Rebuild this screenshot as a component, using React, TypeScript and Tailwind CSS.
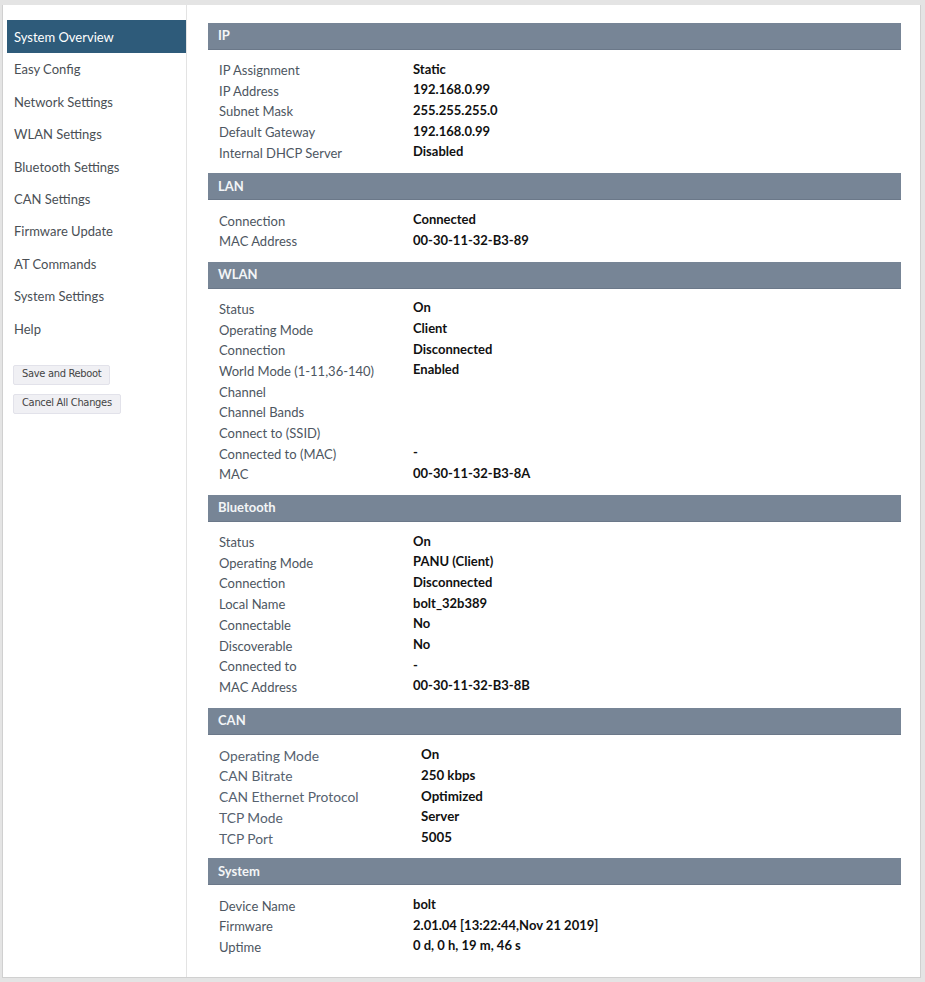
import React from "react";

type Row = [string, string];

interface Section {
  title: string;
  rows: Row[];
  large?: boolean;
}

const menu = [
  "System Overview",
  "Easy Config",
  "Network Settings",
  "WLAN Settings",
  "Bluetooth Settings",
  "CAN Settings",
  "Firmware Update",
  "AT Commands",
  "System Settings",
  "Help",
];

const sections: Section[] = [
  {
    title: "IP",
    rows: [
      ["IP Assignment", "Static"],
      ["IP Address", "192.168.0.99"],
      ["Subnet Mask", "255.255.255.0"],
      ["Default Gateway", "192.168.0.99"],
      ["Internal DHCP Server", "Disabled"],
    ],
  },
  {
    title: "LAN",
    rows: [
      ["Connection", "Connected"],
      ["MAC Address", "00-30-11-32-B3-89"],
    ],
  },
  {
    title: "WLAN",
    rows: [
      ["Status", "On"],
      ["Operating Mode", "Client"],
      ["Connection", "Disconnected"],
      ["World Mode (1-11,36-140)", "Enabled"],
      ["Channel", ""],
      ["Channel Bands", ""],
      ["Connect to (SSID)", ""],
      ["Connected to (MAC)", "-"],
      ["MAC", "00-30-11-32-B3-8A"],
    ],
  },
  {
    title: "Bluetooth",
    rows: [
      ["Status", "On"],
      ["Operating Mode", "PANU (Client)"],
      ["Connection", "Disconnected"],
      ["Local Name", "bolt_32b389"],
      ["Connectable", "No"],
      ["Discoverable", "No"],
      ["Connected to", "-"],
      ["MAC Address", "00-30-11-32-B3-8B"],
    ],
  },
  {
    title: "CAN",
    large: true,
    rows: [
      ["Operating Mode", "On"],
      ["CAN Bitrate", "250 kbps"],
      ["CAN Ethernet Protocol", "Optimized"],
      ["TCP Mode", "Server"],
      ["TCP Port", "5005"],
    ],
  },
  {
    title: "System",
    rows: [
      ["Device Name", "bolt"],
      ["Firmware", "2.01.04 [13:22:44,Nov 21 2019]"],
      ["Uptime", "0 d, 0 h, 19 m, 46 s"],
    ],
  },
];

function SectionBlock({ section }: { section: Section }) {
  return (
    <div>
      <div className="h-[27px] flex items-center pl-[10px] bg-[#778596] border-b border-[#6b7889] text-[13px] font-bold text-[#f3f5f7]">
        {section.title}
      </div>
      <div className={section.large ? "pt-[11px] pb-[9px] pl-[11px]" : "pt-[10px] pb-[10px] pl-[11px]"}>
        {section.rows.map(([label, value], i) => (
          <div key={i} className={section.large ? "flex h-[20.8px] items-center" : "flex h-[20.7px] items-center pt-[1px]"}>
            <div
              className={
                section.large
                  ? "w-[202px] shrink-0 text-[13.8px] text-[#56626f]"
                  : "w-[194px] shrink-0 text-[13px] text-[#4d5661]"
              }
            >
              {label}
            </div>
            <div className={section.large ? "text-[13.3px] font-bold text-[#111] -mt-[2px]" : "text-[13px] font-bold text-[#111] -mt-[3px]"}>
              {value}
            </div>
          </div>
        ))}
      </div>
    </div>
  );
}

export default function App() {
  return (
    <div
      className="w-[925px] h-[982px] bg-[#e4e4e4] pt-[5px] pl-[2px] pr-[4px] pb-[4px]"
      style={{ fontFamily: 'Lato, "Open Sans", sans-serif' }}
    >
      <div className="flex h-full bg-white border-l border-b border-r border-[#d0d0d0]">
        {/* menu */}
        <div className="w-[184px] shrink-0 border-r border-[#e3e3e3] pt-[15px] pl-[4px]">
          {menu.map((item, i) => (
            <div
              key={item}
              className={
                i === 0
                  ? "h-[33px] flex items-center pl-[7px] bg-[#2e5b7a] text-white text-[13px] pt-[2px]"
                  : "h-[32.4px] flex items-center pl-[7px] text-[#4a4f55] text-[13px] pt-[2px]"
              }
            >
              {item}
            </div>
          ))}
          <div className="flex flex-col items-start gap-[9px] mt-[20px] ml-[6px]">
            {["Save and Reboot", "Cancel All Changes"].map((b) => (
              <button
                key={b}
                className="h-[20px] px-[8px] bg-[#f0f0f4] border border-[#e2e2ea] rounded-[2px] text-[11px] text-[#444] tracking-[-0.3px]"
                style={{ fontFamily: '"Liberation Sans Narrow", "DejaVu Sans Condensed", sans-serif' }}
              >
                {b}
              </button>
            ))}
          </div>
        </div>

        {/* content */}
        <div className="flex-1 pl-[21px] pr-[19px] pt-[18px]">
          {sections.map((s) => (
            <SectionBlock key={s.title} section={s} />
          ))}
        </div>
      </div>
    </div>
  );
}
